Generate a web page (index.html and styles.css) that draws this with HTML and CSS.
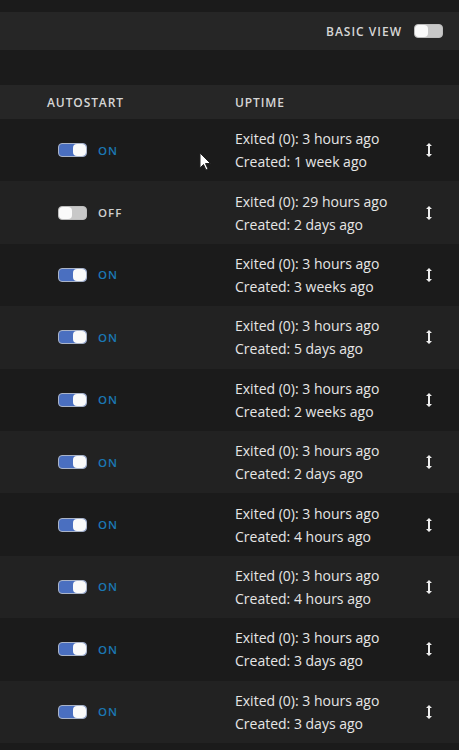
FILE: index.html
```html
<!DOCTYPE html>
<html lang="en">
<head>
    <meta charset="UTF-8">
    <meta name="viewport" content="width=device-width, initial-scale=1.0">
    <title>Containers</title>
    <link rel="stylesheet" href="styles.css">
</head>
<body>
    <div class="topbar">
        <span class="label">BASIC VIEW</span>
        <span class="toggle"></span>
    </div>
    <div class="spacer"></div>
    <div class="table">
        <div class="thead">
            <div class="th-auto">AUTOSTART</div>
            <div class="th-up">UPTIME</div>
        </div>
        <div class="row">
            <div class="col-auto"><span class="toggle on"></span><span class="state on">ON</span></div>
            <div class="col-up">Exited (0): 3 hours ago<br>Created: 1 week ago</div>
            <div class="col-sort"><svg width="8" height="16" viewBox="0 0 8 16"><path d="M4 1 L7 4 H5 V12 H7 L4 15 L1 12 H3 V4 H1 Z" fill="#eee"/></svg></div>
        </div>
        <div class="row">
            <div class="col-auto"><span class="toggle"></span><span class="state">OFF</span></div>
            <div class="col-up">Exited (0): 29 hours ago<br>Created: 2 days ago</div>
            <div class="col-sort"><svg width="8" height="16" viewBox="0 0 8 16"><path d="M4 1 L7 4 H5 V12 H7 L4 15 L1 12 H3 V4 H1 Z" fill="#eee"/></svg></div>
        </div>
        <div class="row">
            <div class="col-auto"><span class="toggle on"></span><span class="state on">ON</span></div>
            <div class="col-up">Exited (0): 3 hours ago<br>Created: 3 weeks ago</div>
            <div class="col-sort"><svg width="8" height="16" viewBox="0 0 8 16"><path d="M4 1 L7 4 H5 V12 H7 L4 15 L1 12 H3 V4 H1 Z" fill="#eee"/></svg></div>
        </div>
        <div class="row">
            <div class="col-auto"><span class="toggle on"></span><span class="state on">ON</span></div>
            <div class="col-up">Exited (0): 3 hours ago<br>Created: 5 days ago</div>
            <div class="col-sort"><svg width="8" height="16" viewBox="0 0 8 16"><path d="M4 1 L7 4 H5 V12 H7 L4 15 L1 12 H3 V4 H1 Z" fill="#eee"/></svg></div>
        </div>
        <div class="row">
            <div class="col-auto"><span class="toggle on"></span><span class="state on">ON</span></div>
            <div class="col-up">Exited (0): 3 hours ago<br>Created: 2 weeks ago</div>
            <div class="col-sort"><svg width="8" height="16" viewBox="0 0 8 16"><path d="M4 1 L7 4 H5 V12 H7 L4 15 L1 12 H3 V4 H1 Z" fill="#eee"/></svg></div>
        </div>
        <div class="row">
            <div class="col-auto"><span class="toggle on"></span><span class="state on">ON</span></div>
            <div class="col-up">Exited (0): 3 hours ago<br>Created: 2 days ago</div>
            <div class="col-sort"><svg width="8" height="16" viewBox="0 0 8 16"><path d="M4 1 L7 4 H5 V12 H7 L4 15 L1 12 H3 V4 H1 Z" fill="#eee"/></svg></div>
        </div>
        <div class="row">
            <div class="col-auto"><span class="toggle on"></span><span class="state on">ON</span></div>
            <div class="col-up">Exited (0): 3 hours ago<br>Created: 4 hours ago</div>
            <div class="col-sort"><svg width="8" height="16" viewBox="0 0 8 16"><path d="M4 1 L7 4 H5 V12 H7 L4 15 L1 12 H3 V4 H1 Z" fill="#eee"/></svg></div>
        </div>
        <div class="row">
            <div class="col-auto"><span class="toggle on"></span><span class="state on">ON</span></div>
            <div class="col-up">Exited (0): 3 hours ago<br>Created: 4 hours ago</div>
            <div class="col-sort"><svg width="8" height="16" viewBox="0 0 8 16"><path d="M4 1 L7 4 H5 V12 H7 L4 15 L1 12 H3 V4 H1 Z" fill="#eee"/></svg></div>
        </div>
        <div class="row">
            <div class="col-auto"><span class="toggle on"></span><span class="state on">ON</span></div>
            <div class="col-up">Exited (0): 3 hours ago<br>Created: 3 days ago</div>
            <div class="col-sort"><svg width="8" height="16" viewBox="0 0 8 16"><path d="M4 1 L7 4 H5 V12 H7 L4 15 L1 12 H3 V4 H1 Z" fill="#eee"/></svg></div>
        </div>
        <div class="row">
            <div class="col-auto"><span class="toggle on"></span><span class="state on">ON</span></div>
            <div class="col-up">Exited (0): 3 hours ago<br>Created: 3 days ago</div>
            <div class="col-sort"><svg width="8" height="16" viewBox="0 0 8 16"><path d="M4 1 L7 4 H5 V12 H7 L4 15 L1 12 H3 V4 H1 Z" fill="#eee"/></svg></div>
        </div>
    </div>
    <!-- mouse pointer -->
    <svg class="pointer" width="14" height="20" viewBox="0 0 14 20">
        <path d="M1 1 V16 L4.5 12.5 L7 18 L9 17 L6.5 11.5 H11.5 Z" fill="#fff" stroke="#222" stroke-width="1"/>
    </svg>
</body>
</html>
```

FILE: styles.css
```css
body {
    margin: 0;
    padding-top: 12px;
    background-color: #1b1b1b;
    font-family: "Open Sans", "Noto Sans", sans-serif;
    color: #e6e6e6;
    height: 738px;
    overflow: hidden;
    position: relative;
}
.topbar {
    height: 38px;
    background-color: #262626;
    display: flex;
    align-items: center;
    justify-content: flex-end;
    padding-right: 16px;
    gap: 12px;
}
.label {
    font-size: 12px;
    font-weight: 600;
    letter-spacing: 1px;
    color: #d6d6d6;
}
.spacer {
    height: 35px;
}
.thead {
    height: 34px;
    background-color: #262626;
    display: flex;
    align-items: center;
    font-size: 12px;
    font-weight: 600;
    letter-spacing: 0.9px;
    color: #d6d6d6;
}
.th-auto {
    padding-left: 47px;
    width: 188px;
}
.row {
    height: 62.4px;
    display: flex;
    align-items: center;
}
.row:nth-child(odd) {
    background-color: #222222;
}
.row:nth-child(even) {
    background-color: #1b1b1b;
}
.col-auto {
    padding-left: 58px;
    width: 177px;
    display: flex;
    align-items: center;
    gap: 11px;
}
.col-up {
    flex: 1;
    font-size: 14px;
    line-height: 23px;
    color: #e6e6e6;
}
.col-sort {
    width: 34px;
    display: flex;
    align-items: center;
}
.toggle {
    display: inline-block;
    position: relative;
    width: 27px;
    height: 12px;
    border-radius: 4px;
    border: 1px solid #bdbdbd;
    background-color: #c8c8c8;
}
.toggle::after {
    content: "";
    position: absolute;
    top: 0;
    left: 0;
    width: 13px;
    height: 12px;
    border-radius: 4px;
    background-color: #fafafa;
}
.toggle.on {
    background-color: #4a6fc0;
    border-color: #aab4c8;
}
.toggle.on::after {
    left: auto;
    right: 0;
}
.state {
    font-size: 11.5px;
    font-weight: 600;
    letter-spacing: 1px;
    color: #cfcfcf;
}
.state.on {
    color: #1b78b4;
}
.pointer {
    position: absolute;
    left: 199px;
    top: 152px;
}
```
